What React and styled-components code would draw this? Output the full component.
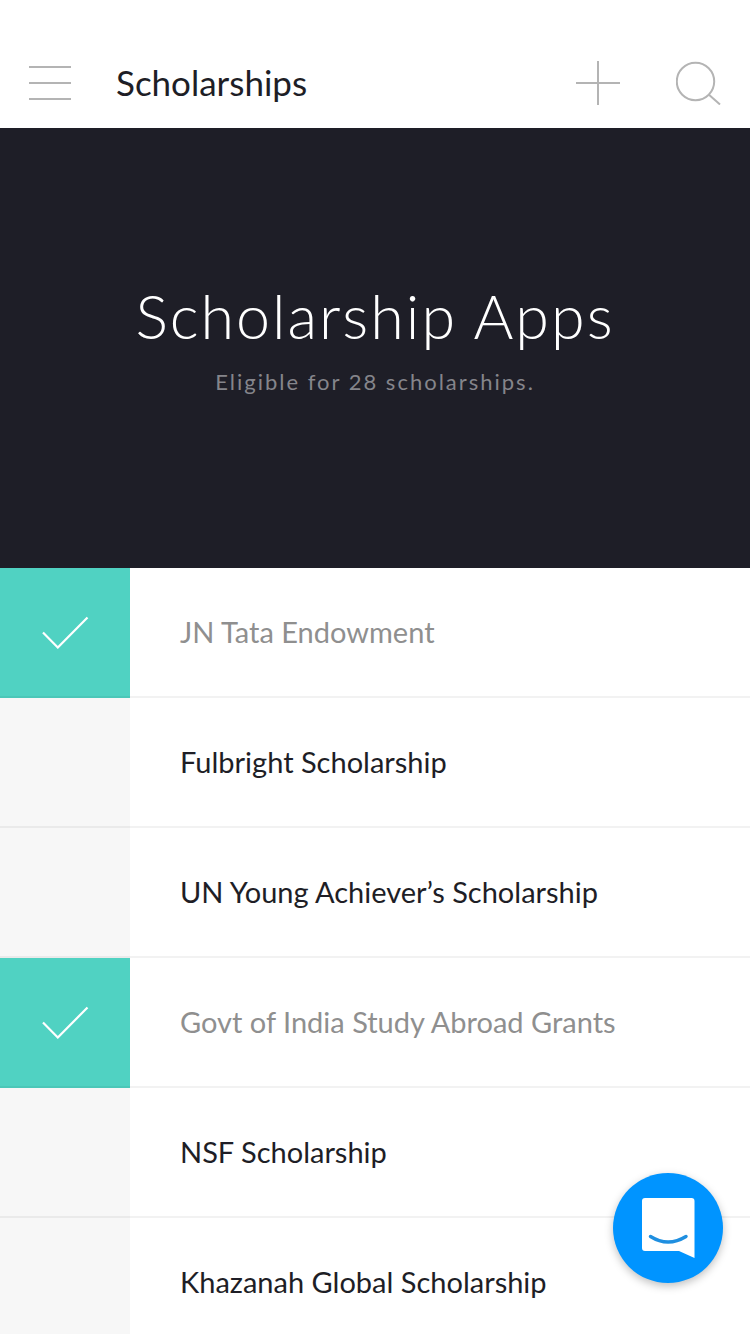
import React, { useState } from 'react';
import styled, { createGlobalStyle } from 'styled-components';

const GlobalStyle = createGlobalStyle`
  * {
    box-sizing: border-box;
  }

  body {
    margin: 0;
    background: #FFFFFF;
    color: #1E1E26;
    font-family: Lato, "Open Sans", sans-serif;
    font-weight: 400;
  }
`;

const Screen = styled.div`
  display: flex;
  flex-direction: column;
  height: 100vh;
`;

const Toolbar = styled.header`
  display: flex;
  align-items: center;
  height: 128px;
  flex-shrink: 0;
  padding: 38px 28px 0;
`;

const ToolbarTitle = styled.h1`
  flex: 1;
  margin: 0 0 0 44px;
  padding-bottom: 2px;
  font-size: 35px;
  line-height: 44px;
  font-weight: 400;
`;

const IconButton = styled.button`
  display: flex;
  height: 44px;
  padding: 0;
  border: 0;
  background: none;
  color: #B4B4B4;
  cursor: pointer;
`;

const ToolbarActions = styled.div`
  display: flex;
  gap: 56px;
`;

const Content = styled.main`
  flex: 1;
  min-height: 0;
  overflow-y: auto;
  scrollbar-width: none;
`;

const Hero = styled.section`
  display: flex;
  flex-direction: column;
  align-items: center;
  justify-content: center;
  height: 440px;
  gap: 16px;
  padding-bottom: 20px;
  background: #1E1E27;
  text-align: center;
`;

const HeroTitle = styled.h2`
  margin: 0;
  color: #FFFFFF;
  font-size: 61px;
  line-height: 72px;
  font-weight: 300;
  letter-spacing: 2px;
`;

const HeroText = styled.p`
  margin: 0;
  color: #85858B;
  font-size: 22px;
  line-height: 28px;
  letter-spacing: 2px;
`;

const List = styled.ul`
  margin: 0;
  padding: 0;
  list-style: none;
`;

const Row = styled.label`
  display: flex;
  height: 130px;
  cursor: pointer;
`;

const Tile = styled.span`
  display: grid;
  width: 130px;
  flex-shrink: 0;
  place-items: center;
  border-bottom: 2px solid rgba(0, 0, 0, 0.05);
  background: ${props => (props.$done ? '#50D2C2' : '#F7F7F7')};

  > * {
    grid-area: 1 / 1;
  }
`;

const TileCheckbox = styled.input`
  width: 100%;
  height: 100%;
  margin: 0;
  appearance: none;
  cursor: pointer;
`;

const TileMark = styled.svg`
  pointer-events: none;
`;

const Name = styled.span`
  display: flex;
  flex: 1;
  align-items: center;
  padding: 0 24px 0 50px;
  border-bottom: 2px solid rgba(0, 0, 0, 0.05);
  color: ${props => (props.$done ? '#8F8F8F' : '#1E1E26')};
  font-size: 29px;
  line-height: 36px;
`;

const ChatButton = styled.button`
  position: fixed;
  right: 27px;
  bottom: 51px;
  width: 110px;
  height: 110px;
  padding: 0;
  border: 0;
  border-radius: 50%;
  background: #0094FF;
  box-shadow: 0 3px 8px rgba(0, 0, 0, 0.25);
  cursor: pointer;
`;

const scholarships = [
  { name: 'JN Tata Endowment', done: true },
  { name: 'Fulbright Scholarship', done: false },
  { name: 'UN Young Achiever’s Scholarship', done: false },
  { name: 'Govt of India Study Abroad Grants', done: true },
  { name: 'NSF Scholarship', done: false },
  { name: 'Khazanah Global Scholarship', done: false },
];

const MenuIcon = () => (
  <svg width="44" height="44" viewBox="0 0 44 44" stroke="currentColor" strokeWidth="2" aria-hidden="true">
    <path d="M1 6h42M1 22h42M1 38h42" />
  </svg>
);

const PlusIcon = () => (
  <svg width="44" height="44" viewBox="0 0 44 44" stroke="currentColor" strokeWidth="2" aria-hidden="true">
    <path d="M0 22h44M22 0v44" />
  </svg>
);

const SearchIcon = () => (
  <svg width="46" height="44" viewBox="0 0 46 44" fill="none" stroke="currentColor" strokeWidth="2" aria-hidden="true">
    <circle cx="19.5" cy="20.5" r="18.7" />
    <path d="M32.7 33.5L44 43.5" />
  </svg>
);

const ChatIcon = () => (
  <svg width="110" height="110" viewBox="0 0 110 110" aria-hidden="true">
    <path d="M32 25h46.500a3 3 0 0 1 3 3v57L66 78H32a3 3 0 0 1-3-3V28a3 3 0 0 1 3-3z" fill="#FFFFFF" />
    <path d="M37.500 63.500q17.500 11 35.500 0" fill="none" stroke="#1F8FE0" strokeWidth="3.500" strokeLinecap="round" />
  </svg>
);

/**
 * One scholarship with the tile that ticks it off.
 */
const ScholarshipRow = ({ name, done, onToggle }) => (
  <li>
    <Row>
      <Tile $done={done}>
        <TileCheckbox type="checkbox" checked={done} onChange={onToggle} />
        {done && (
          <TileMark width="48" height="34" viewBox="0 0 48 34" fill="none" stroke="#FFFFFF" strokeWidth="2.200" aria-hidden="true">
            <path d="M2 17.500L16.800 32.500L46.500 2.500" />
          </TileMark>
        )}
      </Tile>
      <Name $done={done}>{name}</Name>
    </Row>
  </li>
);

const App = () => {
  const [items, setItems] = useState(scholarships);

  const toggle = name => setItems(
    items.map(item => (item.name === name ? { ...item, done: !item.done } : item))
  );

  return (
    <Screen>
      <GlobalStyle />
      <Toolbar>
        <IconButton aria-label="Menu"><MenuIcon /></IconButton>
        <ToolbarTitle>Scholarships</ToolbarTitle>
        <ToolbarActions>
          <IconButton aria-label="Add"><PlusIcon /></IconButton>
          <IconButton aria-label="Search"><SearchIcon /></IconButton>
        </ToolbarActions>
      </Toolbar>
      <Content>
        <Hero>
          <HeroTitle>Scholarship Apps</HeroTitle>
          <HeroText>Eligible for 28 scholarships.</HeroText>
        </Hero>
        <List>
          {items.map(item => (
            <ScholarshipRow key={item.name} {...item} onToggle={() => toggle(item.name)} />
          ))}
        </List>
      </Content>
      <ChatButton aria-label="Open chat"><ChatIcon /></ChatButton>
    </Screen>
  );
};

export default App;
